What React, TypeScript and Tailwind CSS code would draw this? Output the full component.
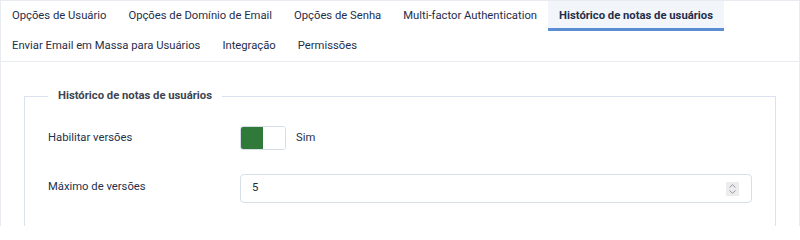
import React, { useState } from 'react';

/* ═══════════════════════════════════════════════
   TABS
═══════════════════════════════════════════════ */
const TABS = [
  'Opções de Usuário',
  'Opções de Domínio de Email',
  'Opções de Senha',
  'Multi-factor Authentication',
  'Histórico de notas de usuários',
  'Enviar Email em Massa para Usuários',
  'Integração',
  'Permissões',
];

const App = () => {
  const [active, setActive] = useState<number>(4);
  const [enabled, setEnabled] = useState<boolean>(true);
  const [max, setMax] = useState<string>('5');

  const font = { fontFamily: 'Roboto, "Liberation Sans", Arial, sans-serif' };

  return (
    <div className="w-[800px] h-[226px] overflow-hidden bg-white" style={font}>
      <div className="border border-[#e8ecf1] min-h-[240px]">
        {/* ===== TAB NAV ===== */}
        <nav className="flex flex-wrap border-b border-[#e8ecf1]">
          {TABS.map((label, idx) => (
            <button
              key={label}
              onClick={() => setActive(idx)}
              className={`h-[30px] px-[11px] flex items-center text-[11.25px] text-[#1f2e4b] whitespace-nowrap ${
                idx === active
                  ? 'bg-[#f2f5f9] font-bold border-b-[3px] border-[#5b8dd3] pt-[3px]'
                  : ''
              }`}
            >
              {label}
            </button>
          ))}
        </nav>

        {/* ===== CONTENT ===== */}
        <div className="px-[23px] pt-[27px]">
          <fieldset className="border border-[#d9e2ee] pl-[23px] pr-[23px] pt-[22px] pb-[24px]">
            <legend className="px-[10px] text-[11.25px] font-bold text-[#3d4450] leading-[14px]">
              Histórico de notas de usuários
            </legend>

            <div className="flex flex-col gap-[24px]">
              {/* Habilitar versões */}
              <div className="flex items-center h-[24px] mt-[1px]">
                <label className="w-[192px] text-[11.25px] text-[#22314f]">Habilitar versões</label>
                <button
                  onClick={() => setEnabled(!enabled)}
                  className="w-[46px] h-[24px] flex rounded-[3px] border border-[#d6dde6] overflow-hidden bg-white"
                  aria-label="Habilitar versões"
                >
                  <span className={`w-[23px] h-full ${enabled ? 'bg-[#2f7a38]' : 'bg-white'}`} />
                  <span className={`w-[23px] h-full ${enabled ? 'bg-white' : 'bg-[#8a8f96]'}`} />
                </button>
                <span className="ml-[10px] text-[11.25px] text-[#22314f]">{enabled ? 'Sim' : 'Não'}</span>
              </div>

              {/* Máximo de versões */}
              <div className="flex items-start">
                <label className="w-[192px] pt-[5px] text-[11.25px] text-[#22314f]">Máximo de versões</label>
                <div className="w-[512px] h-[29px] flex items-center rounded-[4px] border border-[#d6dee8] bg-white pl-[11px] pr-[12px]">
                  <input
                    type="text"
                    value={max}
                    onChange={(e) => setMax(e.target.value)}
                    className="flex-1 min-w-0 text-[11.25px] text-[#1f2b3d] outline-none bg-transparent"
                  />
                  <div className="w-[13px] h-[14px] bg-[#ececee] flex flex-col items-center justify-center gap-[2px]">
                    <svg width="7" height="4" viewBox="0 0 7 4" fill="none">
                      <path d="M0.5 3.5L3.5 0.7L6.5 3.5" stroke="#8c8f95" strokeWidth="0.9" />
                    </svg>
                    <svg width="7" height="4" viewBox="0 0 7 4" fill="none">
                      <path d="M0.5 0.5L3.5 3.3L6.5 0.5" stroke="#8c8f95" strokeWidth="0.9" />
                    </svg>
                  </div>
                </div>
              </div>
            </div>
          </fieldset>
        </div>
      </div>
    </div>
  );
};

export default App;
